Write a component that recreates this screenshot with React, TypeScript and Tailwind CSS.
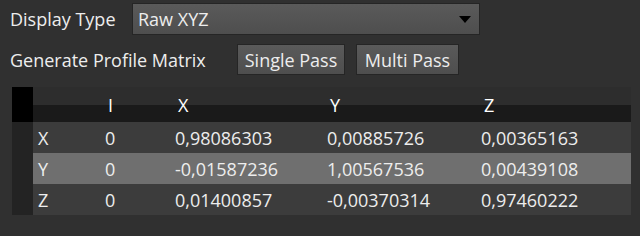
import React from "react";

type Row = {
    label: string;
    i: string;
    x: string;
    y: string;
    z: string;
    selected?: boolean;
};

const rows: Row[] = [
    { label: "X", i: "0", x: "0,98086303", y: "0,00885726", z: "0,00365163" },
    { label: "Y", i: "0", x: "-0,01587236", y: "1,00567536", z: "0,00439108", selected: true },
    { label: "Z", i: "0", x: "0,01400857", y: "-0,00370314", z: "0,97460222" },
];

const font = { fontFamily: '"Open Sans", "Noto Sans", sans-serif' };

function HeaderCell({ text, width }: { text: string; width: string }) {
    return (
        <div className={`${width} h-full flex items-center pl-[8px]`}>
            {text}
        </div>
    );
}

export default function App() {
    return (
        <div
            className="w-[640px] h-[236px] bg-[#303030] text-[#ededed] text-[18px] font-medium leading-none pt-[3px] pl-[10px] overflow-hidden"
            style={font}
        >
            {/* display type */}
            <div className="flex items-center h-[32px]">
                <div className="w-[122px]">Display Type</div>
                <div className="w-[348px] h-full flex items-center justify-between pl-[5px] pr-[8px] border border-[#252525] bg-[linear-gradient(to_bottom,#5a5a5a,#4e4e4e)]">
                    <span>Raw XYZ</span>
                    <svg width="12" height="7" viewBox="0 0 12 7">
                        <path d="M0 0 L12 0 L6 7 Z" fill="#000" />
                    </svg>
                </div>
            </div>

            {/* profile matrix */}
            <div className="flex items-center h-[31px] mt-[9px]">
                <div className="w-[227px]">Generate Profile Matrix</div>
                <div className="flex gap-[11px] h-full">
                    <button className="w-[108px] h-full flex items-center justify-center border border-[#252525] bg-[linear-gradient(to_bottom,#5a5a5a,#4e4e4e)]">
                        Single Pass
                    </button>
                    <button className="w-[103px] h-full flex items-center justify-center border border-[#252525] bg-[linear-gradient(to_bottom,#5a5a5a,#4e4e4e)]">
                        Multi Pass
                    </button>
                </div>
            </div>

            {/* matrix table */}
            <div className="mt-[12px] ml-[2px] w-[619px] flex flex-col">
                <div className="flex h-[35px] bg-[linear-gradient(to_bottom,#2d2d2d_51%,#1a1a1a_51%)] text-white">
                    <div className="w-[21px] h-full bg-black" />
                    <div className="w-[67px]" />
                    <HeaderCell text="I" width="w-[70px]" />
                    <HeaderCell text="X" width="w-[152px]" />
                    <HeaderCell text="Y" width="w-[154px]" />
                    <HeaderCell text="Z" width="w-[155px]" />
                </div>
                {rows.map((row) => (
                    <div
                        key={row.label}
                        className={`flex h-[31px] ${row.selected ? "bg-[#6f6f6f]" : "bg-[#3c3c3c]"}`}
                    >
                        <div className="w-[21px] h-full bg-[#232323]" />
                        <div className="w-[67px] flex items-center pl-[5px]">{row.label}</div>
                        <div className="w-[70px] flex items-center pl-[5px]">{row.i}</div>
                        <div className="w-[152px] flex items-center pl-[5px]">{row.x}</div>
                        <div className="w-[154px] flex items-center pl-[5px]">{row.y}</div>
                        <div className="w-[155px] flex items-center pl-[5px]">{row.z}</div>
                    </div>
                ))}
            </div>
        </div>
    );
}
